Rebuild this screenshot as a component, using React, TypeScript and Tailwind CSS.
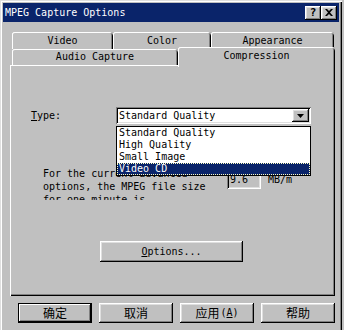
import React from 'react';

const raised =
  'shadow-[inset_-1px_-1px_0_#000,inset_1px_1px_0_#fff,inset_-2px_-2px_0_#808080,inset_2px_2px_0_#dfdfdf]';
const sunken =
  'shadow-[inset_1px_1px_0_#808080,inset_-1px_-1px_0_#fff,inset_2px_2px_0_#000,inset_-2px_-2px_0_#dfdfdf]';
const tab =
  'shadow-[inset_1px_0_0_#fff,inset_0_1px_0_#fff,inset_-1px_0_0_#000,inset_-2px_0_0_#808080]';

function Tab({ label, w, selected }: { label: string; w: string; selected?: boolean }) {
  return (
    <div
      className={`${w} ${tab} ${
        selected ? 'h-[20px] -mb-[2px] pb-[3px] relative z-10' : 'h-full'
      } flex items-center justify-center rounded-t-[3px] bg-[#c0c0c0]`}
    >
      {label}
    </div>
  );
}

function DialogButton({ children, isDefault }: { children: React.ReactNode; isDefault?: boolean }) {
  return (
    <button
      className={`w-[74px] h-[20px] flex items-center justify-center bg-[#c0c0c0] font-['Noto_Sans_CJK_SC',sans-serif] text-[12px] leading-none text-black ${
        isDefault
          ? 'shadow-[inset_0_0_0_1px_#000,inset_-2px_-2px_0_#000,inset_2px_2px_0_#fff,inset_-3px_-3px_0_#808080]'
          : raised
      }`}
    >
      {children}
    </button>
  );
}

export default function App() {
  const items = ['Standard Quality', 'High Quality', 'Small Image', 'Video CD'];

  return (
    <div className="w-[344px] h-[330px] overflow-hidden bg-[#c0c0c0] font-['DejaVu_Sans_Mono','Noto_Sans_CJK_SC',monospace] text-[10px] leading-[12px] text-black">
      <div className="w-[342px] h-[336px] p-[3px] shadow-[inset_1px_1px_0_#dfdfdf,inset_2px_2px_0_#fff,inset_-1px_-1px_0_#000,inset_-2px_-2px_0_#808080]">
        {/* title bar */}
        <div className="h-[19px] bg-[#0a246a] flex items-center pl-[2px] pr-[2px] text-white text-[10px]">
          <span className="flex-1 pt-[1px]">MPEG Capture Options</span>
          <div className={`w-[16px] h-[14px] bg-[#c0c0c0] ${raised} flex items-center justify-center text-black font-bold text-[11px]`}>
            ?
          </div>
          <div className={`w-[16px] h-[14px] bg-[#c0c0c0] ${raised} flex items-center justify-center`}>
            <svg width="8" height="7" viewBox="0 0 8 7">
              <path d="M0 0h2l2 2 2-2h2L5 3.5 8 7H6L4 5 2 7H0l3-3.5z" fill="#000" />
            </svg>
          </div>
        </div>

        <div className="pl-[7px] pr-[4px]">
          {/* tabs */}
          <div className="mt-[10px] flex h-[17px] pl-[2px]">
            <Tab label="Video" w="w-[101px]" />
            <Tab label="Color" w="w-[98px]" />
            <Tab label="Appearance" w="w-[123px]" />
          </div>
          <div className="flex h-[16px] items-end pl-[2px]">
            <Tab label="Audio Capture" w="w-[166px]" />
            <Tab label="Compression" w="w-[157px]" selected />
          </div>

          {/* panel */}
          <div className="relative h-[231px] shadow-[inset_1px_1px_0_#fff,inset_-1px_-1px_0_#000,inset_-2px_-2px_0_#808080]">
            <div className="flex items-center pl-[21px] pt-[42px]">
              <span className="w-[85px]">
                <span className="underline">T</span>ype:
              </span>
              <div className={`w-[195px] h-[17px] bg-white ${sunken} flex items-center pl-[3px] pr-[2px]`}>
                <span className="flex-1">Standard Quality</span>
                <div className={`w-[17px] h-[13px] bg-[#c0c0c0] ${raised} flex items-center justify-center`}>
                  <svg width="7" height="4" viewBox="0 0 7 4">
                    <path d="M0 0h7L3.5 4z" fill="#000" />
                  </svg>
                </div>
              </div>
            </div>

            <div className="flex pl-[33px] mt-[43px]">
              <div className="w-[184px] h-[33px] overflow-hidden leading-[13px]">
                <div>For the current advanced</div>
                <div>options, the MPEG file size</div>
                <div>for one minute is</div>
              </div>
              <div className={`mt-[4px] w-[34px] h-[18px] ${sunken} flex items-center pl-[3px]`}>9.6</div>
              <span className="ml-[7px] mt-[7px]">MB/m</span>
            </div>

            <div className="flex pl-[90px] mt-[41px]">
              <div className={`w-[143px] h-[21px] ${raised} flex items-center justify-center`}>
                <span>
                  <span className="underline">O</span>ptions...
                </span>
              </div>
            </div>

            {/* open dropdown list */}
            <div className="absolute left-[106px] top-[61px] w-[195px] border border-black bg-white">
              {items.map((it) => (
                <div
                  key={it}
                  className={`h-[12px] pl-[2px] leading-[12px] ${
                    it === 'Video CD' ? 'bg-[#0a246a] text-white outline outline-1 outline-dotted outline-[#ffffc0] -outline-offset-1' : ''
                  }`}
                >
                  {it}
                </div>
              ))}
            </div>
          </div>

          {/* buttons */}
          <div className="flex gap-[7px] pl-[8px] mt-[7px]">
            <DialogButton isDefault>确定</DialogButton>
            <DialogButton>取消</DialogButton>
            <DialogButton>
              应用
              <span className="font-['DejaVu_Sans_Mono',monospace] text-[10px] ml-[1px]">
                (<span className="underline">A</span>)
              </span>
            </DialogButton>
            <DialogButton>帮助</DialogButton>
          </div>
        </div>
      </div>
    </div>
  );
}
